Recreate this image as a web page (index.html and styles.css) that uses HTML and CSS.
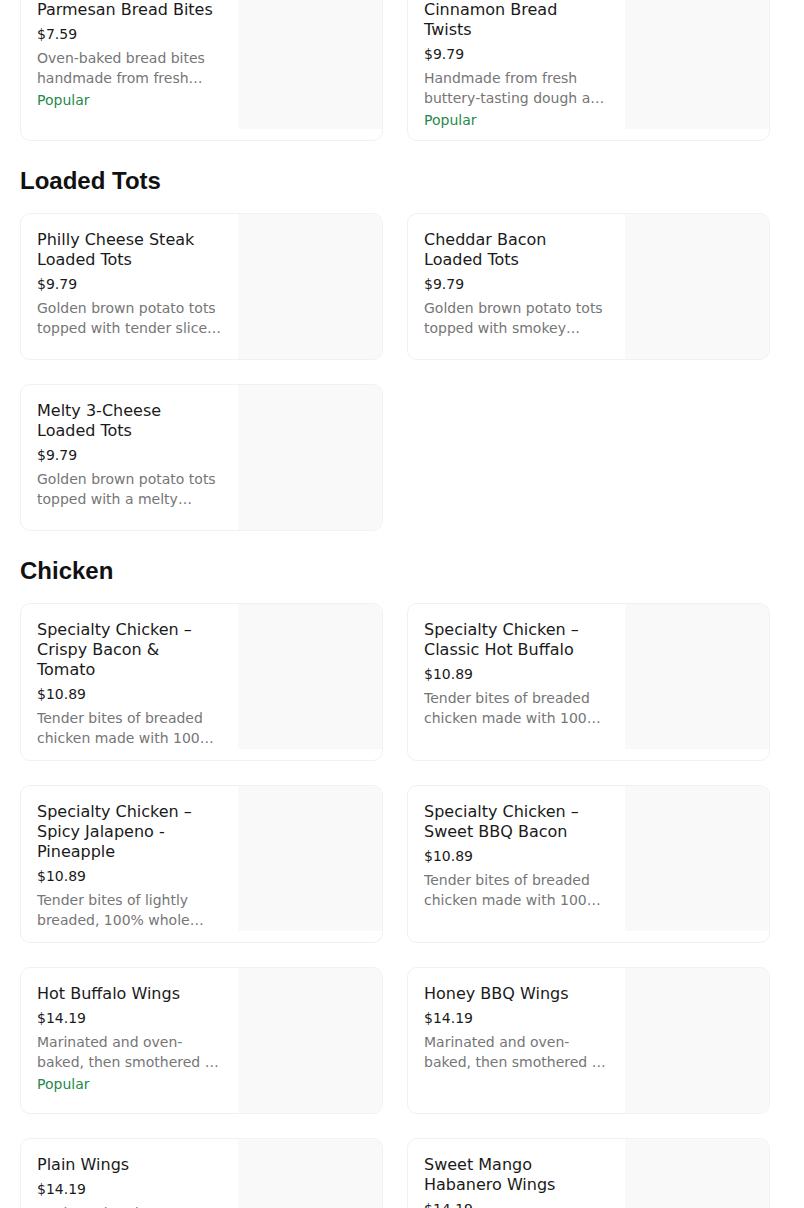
FILE: index.html
```html
<!DOCTYPE html>
<html lang="en">
<head>
<meta charset="utf-8">
<title>Menu</title>
<link rel="stylesheet" href="styles.css">
</head>
<body>
<main class="menu">
  <section class="section section-first">
    <div class="grid">
      <article class="card">
        <div class="info">
          <h3 class="title">Parmesan Bread Bites</h3>
          <div class="price">$7.59</div>
          <p class="desc">Oven-baked bread bites handmade from fresh buttery-tasting dough and seasoned with garlic and Parmesan.</p>
          <div class="tag">Popular</div>
        </div>
        <div class="img"></div>
      </article>
      <article class="card">
        <div class="info">
          <h3 class="title">Cinnamon Bread Twists</h3>
          <div class="price">$9.79</div>
          <p class="desc">Handmade from fresh buttery-tasting dough and baked to a golden brown. Crispy on the outside and soft on the inside.</p>
          <div class="tag">Popular</div>
        </div>
        <div class="img"></div>
      </article>
    </div>
  </section>

  <section class="section">
    <h2 class="heading">Loaded Tots</h2>
    <div class="grid">
      <article class="card">
        <div class="info">
          <h3 class="title">Philly Cheese Steak Loaded Tots</h3>
          <div class="price">$9.79</div>
          <p class="desc">Golden brown potato tots topped with tender slices of steak, onions, green peppers, mushrooms and provolone.</p>
        </div>
        <div class="img"></div>
      </article>
      <article class="card">
        <div class="info">
          <h3 class="title">Cheddar Bacon Loaded Tots</h3>
          <div class="price">$9.79</div>
          <p class="desc">Golden brown potato tots topped with smokey bacon, melted cheddar cheese and ranch.</p>
        </div>
        <div class="img"></div>
      </article>
      <article class="card">
        <div class="info">
          <h3 class="title">Melty 3-Cheese Loaded Tots</h3>
          <div class="price">$9.79</div>
          <p class="desc">Golden brown potato tots topped with a melty combination of mozzarella, cheddar and provolone.</p>
        </div>
        <div class="img"></div>
      </article>
    </div>
  </section>

  <section class="section">
    <h2 class="heading">Chicken</h2>
    <div class="grid">
      <article class="card">
        <div class="info">
          <h3 class="title">Specialty Chicken – Crispy Bacon &amp; Tomato</h3>
          <div class="price">$10.89</div>
          <p class="desc">Tender bites of breaded chicken made with 100% whole breast white meat, topped with bacon and tomato.</p>
        </div>
        <div class="img"></div>
      </article>
      <article class="card">
        <div class="info">
          <h3 class="title">Specialty Chicken – Classic Hot Buffalo</h3>
          <div class="price">$10.89</div>
          <p class="desc">Tender bites of breaded chicken made with 100% whole breast white meat, topped with hot buffalo sauce.</p>
        </div>
        <div class="img"></div>
      </article>
      <article class="card">
        <div class="info">
          <h3 class="title">Specialty Chicken – Spicy Jalapeno - Pineapple</h3>
          <div class="price">$10.89</div>
          <p class="desc">Tender bites of lightly breaded, 100% whole breast white meat chicken, topped with jalapenos and pineapple.</p>
        </div>
        <div class="img"></div>
      </article>
      <article class="card">
        <div class="info">
          <h3 class="title">Specialty Chicken – Sweet BBQ Bacon</h3>
          <div class="price">$10.89</div>
          <p class="desc">Tender bites of breaded chicken made with 100% whole breast white meat, topped with sweet BBQ sauce and bacon.</p>
        </div>
        <div class="img"></div>
      </article>
      <article class="card">
        <div class="info">
          <h3 class="title">Hot Buffalo Wings</h3>
          <div class="price">$14.19</div>
          <p class="desc">Marinated and oven-baked, then smothered in Hot Buffalo sauce.</p>
          <div class="tag">Popular</div>
        </div>
        <div class="img"></div>
      </article>
      <article class="card">
        <div class="info">
          <h3 class="title">Honey BBQ Wings</h3>
          <div class="price">$14.19</div>
          <p class="desc">Marinated and oven-baked, then smothered in sweet and smoky Honey BBQ sauce.</p>
        </div>
        <div class="img"></div>
      </article>
      <article class="card">
        <div class="info">
          <h3 class="title">Plain Wings</h3>
          <div class="price">$14.19</div>
          <p class="desc">Marinated and oven-baked, then served with your choice of dipping cup.</p>
        </div>
        <div class="img"></div>
      </article>
      <article class="card">
        <div class="info">
          <h3 class="title">Sweet Mango Habanero Wings</h3>
          <div class="price">$14.19</div>
          <p class="desc">Marinated and oven-baked, then smothered in Sweet Mango Habanero sauce.</p>
        </div>
        <div class="img"></div>
      </article>
    </div>
  </section>
</main>
</body>
</html>
```

FILE: styles.css
```css
html, body {
  margin: 0;
  padding: 0;
  background: #ffffff;
}

body {
  font-family: "DejaVu Sans", "Noto Sans", sans-serif;
  color: #1a1a1a;
}

.menu {
  padding: 0 20px 40px;
  margin-top: -17px;
  display: flex;
  flex-direction: column;
  gap: 24px;
}

.heading {
  margin: 0 0 16px;
  font-family: "Liberation Sans", Arial, sans-serif;
  font-weight: 700;
  font-size: 24px;
  line-height: 32px;
  color: #111111;
}

.grid {
  display: grid;
  grid-template-columns: 363px 363px;
  gap: 24px;
}

.card {
  display: flex;
  align-items: flex-start;
  border: 1px solid #f1f1f1;
  border-radius: 10px;
  overflow: hidden;
  background: #ffffff;
}

.info {
  flex: 1 1 auto;
  min-width: 0;
  padding: 16px 16px 10px;
}

.title {
  margin: 0;
  font-size: 16px;
  font-weight: 400;
  line-height: 20px;
  color: #1a1a1a;
}

.price {
  margin-top: 4px;
  font-size: 14px;
  line-height: 20px;
  color: #1a1a1a;
}

.desc {
  margin: 4px 0 2px;
  font-size: 14px;
  line-height: 20px;
  color: #767676;
  display: -webkit-box;
  -webkit-box-orient: vertical;
  -webkit-line-clamp: 2;
  overflow: hidden;
}

.tag {
  margin-top: 2px;
  font-size: 14px;
  line-height: 20px;
  color: #1f8a4c;
}

.img {
  flex: 0 0 144px;
  width: 144px;
  height: 145px;
  background: #f9f9f9;
}
```
